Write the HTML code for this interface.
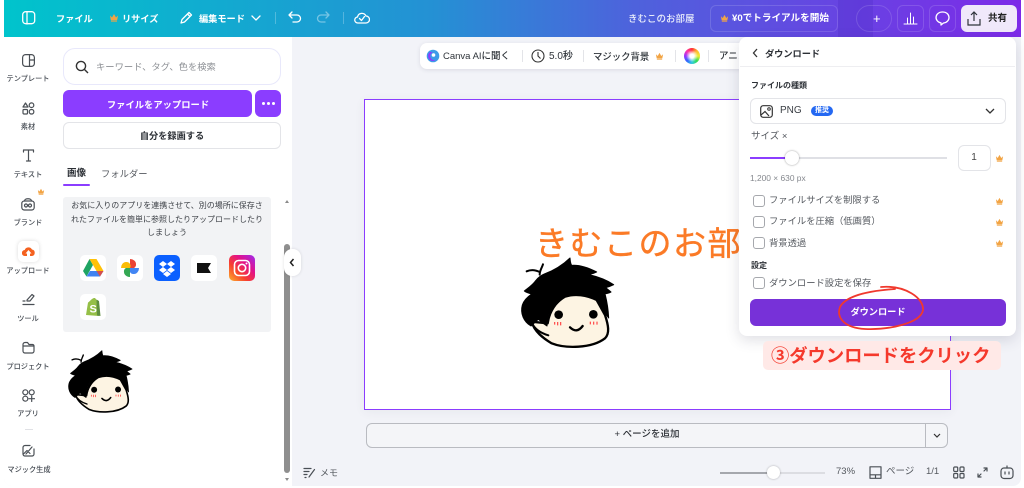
<!DOCTYPE html>
<html lang="ja"><head><meta charset="utf-8"><title>Canva</title>
<style>
*{box-sizing:border-box}
html,body{margin:0;padding:0}
body{width:1024px;height:488px;background:#fff;overflow:hidden;position:relative;font-family:"Liberation Sans","Noto Sans CJK JP",sans-serif;color:#2f343a}
div,svg,span.a{position:absolute}
.t{position:absolute;white-space:nowrap;line-height:20px;height:20px;font-size:10px;margin-top:2px}
.w{color:#fff;font-weight:700}
.c{transform:translateX(-50%)}
.s{font-size:7.200px;font-weight:500;color:#444a52;margin-top:1px}
.g{color:#55595f}
.i{fill:none;stroke:#4a4f55;stroke-width:1.200;stroke-linecap:round;stroke-linejoin:round}
.h{fill:none;stroke:#fff;stroke-width:1.300;stroke-linecap:round;stroke-linejoin:round}
.app{width:26px;height:26px;background:#fff;border-radius:5px}
.cb{width:12px;height:12px;border:1.200px solid #a6a8ad;border-radius:3px;left:753px;background:#fff}
.d{width:1px;background:#e3e4e8}
</style></head><body>
<svg width="0" height="0" style="position:absolute"><defs>
<symbol id="crown" viewBox="0 0 10 9"><path fill="#f2a444" d="M1 2.500 3 4.500 5 1 7 4.500 9 2.500 8.200 7H1.800Z"/><rect x="2" y="7.400" width="6" height="1.200" fill="#f2a444"/></symbol>
<symbol id="face" viewBox="0 0 300 312">
<path d="M50 215C58 245 85 265 110 280C150 296 230 296 270 265C285 250 280 225 270 195L245 150C215 135 180 130 150 140C125 155 105 175 98 220Z" fill="#fdf4e3" stroke="#000" stroke-width="7" stroke-linejoin="round"/>
<path d="M50 218C60 240 80 250 100 256" fill="none" stroke="#000" stroke-width="6" stroke-linecap="round"/>
<path d="M48 228C26 215 15 190 22 165C27 150 38 140 50 132C42 130 34 128 28 123C42 112 54 104 62 92C70 82 78 76 88 72C115 62 140 48 165 24C166 33 166 40 170 46C195 44 222 54 245 66C238 70 230 72 222 74C248 80 275 90 296 104C288 108 280 111 272 113C278 118 284 122 288 126C282 129 276 131 270 131C276 155 280 180 281 204L262 178L245 150C215 135 180 130 150 140C130 155 115 170 102 205C104 185 110 165 118 150C104 170 98 195 96 228C86 222 78 214 70 208C62 214 56 222 48 228Z" fill="#000" stroke="#000" stroke-width="3" stroke-linejoin="round"/>
<path d="M35 64C48 58 62 60 74 66M84 43C80 55 74 62 74 74" fill="none" stroke="#000" stroke-width="6" stroke-linecap="round"/>
<circle cx="131" cy="194" r="13" fill="#000"/><circle cx="235" cy="193" r="13" fill="#000"/>
<path d="M119 216v8M128 216v10M137 216v10M226 215v8M236 215v9M246 215v9" stroke="#f44" stroke-width="3.500"/>
<path d="M165 232Q185 252 203 228" fill="none" stroke="#000" stroke-width="7" stroke-linecap="round"/>
</symbol>
</defs></svg>

<!-- main background -->
<div style="left:4px;top:0;width:1017px;height:486px;background:#f2f3f8;border-radius:0 0 8px 8px;overflow:hidden">
<div style="left:0;top:37px;width:288px;height:449px;background:#fff"></div>
</div>

<!-- header -->
<div style="left:4px;top:0;width:1017px;height:37px;background:linear-gradient(90deg,#00c4cc 0%,#2491d4 42%,#4e62dc 62%,#7d2ae8 100%)"></div>
<div style="left:838px;top:0;width:35px;height:37px;background:rgba(70,40,190,.25)"></div>
<svg style="left:22px;top:11px" width="14" height="14" viewBox="0 0 14 14"><rect x=".7" y=".7" width="12" height="12" rx="3" class="h"/><path d="M5 1v12" class="h"/></svg>
<span class="t w" style="left:56px;top:7px;font-size:9.200px">ファイル</span>
<svg style="left:109px;top:13px" width="10" height="9"><use href="#crown"/></svg>
<span class="t w" style="left:122px;top:7px;font-size:9.200px">リサイズ</span>
<svg style="left:179px;top:11px" width="14" height="14" viewBox="0 0 14 14"><path d="M2 12 3 8.500 10 1.500 12.500 4 5.500 11Z M8.500 3l2.500 2.500" class="h"/></svg>
<span class="t w" style="left:199px;top:7px;font-size:9.200px">編集モード</span>
<svg style="left:251px;top:15px" width="10" height="6"><path d="M1 1l4 4 4-4" class="h"/></svg>
<div class="d" style="left:275px;top:12px;height:12px;background:rgba(255,255,255,.25)"></div>
<svg style="left:288px;top:11px" width="14" height="13" viewBox="0 0 14 13"><path d="M4 1 1 4l3 3M1 4h8a3.500 3.500 0 0 1 0 7H5" class="h"/></svg>
<svg style="left:316px;top:11px;opacity:.4" width="14" height="13" viewBox="0 0 14 13"><path d="M10 1l3 3-3 3M13 4H5a3.500 3.500 0 0 0 0 7h4" class="h"/></svg>
<div class="d" style="left:343px;top:12px;height:12px;background:rgba(255,255,255,.25)"></div>
<svg style="left:354px;top:11px" width="16" height="13" viewBox="0 0 16 13"><path d="M4 12a3 3 0 0 1-.5-6A4.500 4.500 0 0 1 12 5a3.500 3.500 0 0 1 0 7ZM5.500 7.500 7.500 9.500 10.500 5.500" class="h"/></svg>
<span class="t" style="left:628px;top:8px;color:#e8ecfb;font-size:9.500px;font-weight:500">きむこのお部屋</span>
<div style="left:710px;top:5px;width:128px;height:27px;border:1px solid rgba(255,255,255,.14);border-radius:6px"></div>
<svg style="left:720px;top:14px" width="9" height="8"><use href="#crown"/></svg>
<span class="t w" style="left:732px;top:7px;font-size:9.600px">¥0でトライアルを開始</span>
<div style="left:856px;top:5px;width:36px;height:27px;border:1px solid rgba(255,255,255,.14);border-radius:14px"></div>
<span class="t w" style="left:873px;top:7px;font-size:13px;font-weight:400">+</span>
<div style="left:897px;top:5px;width:27px;height:27px;border:1px solid rgba(255,255,255,.14);border-radius:6px"></div>
<svg style="left:903px;top:12px" width="15" height="13" viewBox="0 0 15 13"><path d="M1 12h13M4.500 12V6M7.500 12V1M10.500 12V5" class="h" style="stroke-width:1"/></svg>
<div style="left:929px;top:5px;width:27px;height:27px;border:1px solid rgba(255,255,255,.14);border-radius:6px"></div>
<svg style="left:935px;top:11px" width="15" height="15" viewBox="0 0 15 15"><path d="M7.500 1a6 5.500 0 0 1 1 11L6 14v-2.100A6 5.500 0 0 1 7.500 1Z" class="h"/></svg>
<div style="left:961px;top:5px;width:56px;height:27px;background:#f0e8fa;border-radius:6px"></div>
<svg style="left:967px;top:11px" width="14" height="15" viewBox="0 0 14 15"><path d="M7 10V1.500M4 4l3-3 3 3M1 8v6h12V8" fill="none" stroke="#2f343a" stroke-width="1.200"/></svg>
<span class="t" style="left:988px;top:7px;font-weight:700;color:#222;font-size:9.500px">共有</span>

<!-- sidebar rail -->
<svg style="left:22px;top:54px" width="13" height="13" viewBox="0 0 13 13"><rect x=".6" y=".6" width="11.800" height="11.800" rx="3" class="i"/><path d="M7.500 1v11M7.500 6H12" class="i"/></svg>
<span class="t s c" style="left:28px;top:68px">テンプレート</span>
<svg style="left:22px;top:102px" width="13" height="13" viewBox="0 0 13 13"><path d="M3.500 1 6 5H1Z" class="i"/><circle cx="9.500" cy="3.200" r="2.300" class="i"/><rect x="1" y="7.500" width="4.500" height="4.500" rx="1" class="i"/><rect x="7.300" y="7.500" width="4.500" height="4.500" rx="2" class="i"/></svg>
<span class="t s c" style="left:28px;top:116px">素材</span>
<svg style="left:22px;top:149px" width="13" height="13" viewBox="0 0 13 13"><path d="M1.500 3V1h10v2M6.500 1v11M4.500 12h4" class="i"/></svg>
<span class="t s c" style="left:28px;top:164px">テキスト</span>
<svg style="left:37px;top:188px" width="8" height="7"><use href="#crown"/></svg>
<svg style="left:21px;top:197px" width="14" height="14" viewBox="0 0 14 14"><rect x=".8" y="4" width="12.400" height="9" rx="2.500" class="i"/><path d="M3.500 4C3.500 1 10.500 1 10.500 4" class="i"/><circle cx="5" cy="8.500" r="1.500" class="i"/><circle cx="9" cy="8.500" r="1.500" class="i"/></svg>
<span class="t s c" style="left:28px;top:212px">ブランド</span>
<div style="left:18px;top:241px;width:21px;height:21px;background:#fff;border-radius:5px;box-shadow:0 0 4px rgba(0,0,0,.14)"></div>
<svg style="left:22px;top:246px" width="13" height="11" viewBox="0 0 13 11"><path d="M3 10a3 3 0 0 1-.3-6A4 4 0 0 1 10 3.500 3.300 3.300 0 0 1 10 10H8V7.500h1.500L6.500 4 3.500 7.500H5V10Z" fill="#f4611f"/></svg>
<span class="t s c" style="left:28px;top:260px">アップロード</span>
<svg style="left:22px;top:292px" width="14" height="14" viewBox="0 0 14 14"><path d="M5 8 10 2.500 12 4 8 9H5ZM1 9h2M1 12.500h11" class="i"/></svg>
<span class="t s c" style="left:28px;top:308px">ツール</span>
<svg style="left:22px;top:341px" width="13" height="13" viewBox="0 0 13 13"><path d="M1 3.500A2 2 0 0 1 3 1.500h2.500L7 3.500h3.500a1.500 1.500 0 0 1 1.500 1.500v5a2 2 0 0 1-2 2H3a2 2 0 0 1-2-2ZM1 5h11" class="i"/></svg>
<span class="t s c" style="left:28px;top:356px">プロジェクト</span>
<svg style="left:22px;top:389px" width="13" height="13" viewBox="0 0 13 13"><circle cx="3.300" cy="3.300" r="2.500" class="i"/><circle cx="9.700" cy="3.300" r="2.500" class="i"/><circle cx="3.300" cy="9.700" r="2.500" class="i"/><path d="M9.700 7v5.500M7 9.700h5.500" class="i"/></svg>
<span class="t s c" style="left:28px;top:403px">アプリ</span>
<div style="left:25px;top:429px;width:8px;height:1px;background:#e0e1e5"></div>
<svg style="left:22px;top:444px" width="13" height="13" viewBox="0 0 13 13"><path d="M8 1.500H3A2 2 0 0 0 1 3.500v6.500a2 2 0 0 0 2 2h7a2 2 0 0 0 2-2V5M1.500 10 5 6.500 8 9.500M4 10 10 3" class="i"/></svg>
<span class="t s c" style="left:29px;top:459px">マジック生成</span>

<!-- side panel -->
<div style="left:63px;top:48px;width:218px;height:37px;border:1px solid #e8e8fb;border-radius:12px;background:#fff"></div>
<svg style="left:75px;top:60px" width="14" height="14" viewBox="0 0 14 14"><circle cx="6" cy="6" r="4.600" fill="none" stroke="#333" stroke-width="1.400"/><path d="M9.500 9.500 13 13" stroke="#333" stroke-width="1.400"/></svg>
<span class="t" style="left:96px;top:55px;color:#8d9095;font-size:9.300px">キーワード、タグ、色を検索</span>
<div style="left:63px;top:90px;width:189px;height:27px;background:#8b3dff;border-radius:6px"></div>
<span class="t w c" style="left:158px;top:93px;font-size:9.300px">ファイルをアップロード</span>
<div style="left:255px;top:90px;width:26px;height:27px;background:#8b3dff;border-radius:6px"></div>
<div style="left:262px;top:102px;width:3px;height:3px;background:#fff;border-radius:50%;box-shadow:5px 0 #fff,10px 0 #fff"></div>
<div style="left:63px;top:122px;width:218px;height:27px;border:1px solid #e3e4e8;border-radius:6px;background:#fff"></div>
<span class="t c" style="left:172px;top:124px;font-weight:700;color:#2b2f35;font-size:9.200px">自分を録画する</span>
<span class="t" style="left:67px;top:162px;font-weight:700;color:#2b2f35;font-size:9.500px">画像</span>
<span class="t g" style="left:101px;top:162px;font-size:9.300px">フォルダー</span>
<div style="left:63px;top:184px;width:27px;height:2px;background:#8b3dff;border-radius:1px"></div>
<div style="left:63px;top:197px;width:208px;height:135px;background:#f2f3f5;border-radius:3px"></div>
<span class="t c" style="left:167px;top:194px;font-size:8px;color:#3d4147">お気に入りのアプリを連携させて、別の場所に保存さ</span>
<span class="t c" style="left:167px;top:208px;font-size:8px;color:#3d4147">れたファイルを簡単に参照したりアップロードしたり</span>
<span class="t c" style="left:167px;top:221px;font-size:8px;color:#3d4147">しましょう</span>

<div class="app" style="left:80px;top:255px"><svg width="26" height="26" viewBox="0 0 26 26"><path d="M9.500 4 3 16l3.500 5.500L13 10Z" fill="#1fa463"/><path d="M9.500 4h7L23.500 16H16.500Z" fill="#ffc107"/><path d="M6.500 21.500 10 16h13.500L20 21.500Z" fill="#3f82f1"/><path d="M16.500 16h7L20 21.500Z" fill="#e64a3b" opacity=".9"/></svg></div>
<div class="app" style="left:117px;top:255px"><svg width="26" height="26" viewBox="0 0 26 26"><path d="M13 13V4a6 5 0 0 1 6 5 4 4 0 0 1-6 4Z" fill="#ea4335"/><path d="M13 13h9a5 6 0 0 1-5 6 4 4 0 0 1-4-6Z" fill="#4285f4"/><path d="M13 13v9a6 5 0 0 1-6-5 4 4 0 0 1 6-4Z" fill="#34a853"/><path d="M13 13H4a5 6 0 0 1 5-6 4 4 0 0 1 4 6Z" fill="#fbbc05"/></svg></div>
<div class="app" style="left:154px;top:255px;background:#0b60ff"><svg width="26" height="26" viewBox="0 0 26 26"><path d="M9 6 13 9 9 12 5 9ZM17 6 21 9 17 12 13 9ZM9 12 13 15 9 18 5 15ZM17 12 21 15 17 18 13 15ZM9 19 13 16 17 19 13 22Z" fill="#fff"/></svg></div>
<div class="app" style="left:191px;top:255px"><svg width="26" height="26" viewBox="0 0 26 26"><path d="M6 8H20L17 13 20 18H6Z" fill="#111"/></svg></div>
<div class="app" style="left:229px;top:255px;background:linear-gradient(45deg,#fcb12d 0%,#f7402e 35%,#e3128a 65%,#9c2cf0 100%)"><svg width="26" height="26" viewBox="0 0 26 26"><rect x="5.500" y="5.500" width="15" height="15" rx="4" fill="none" stroke="#fff" stroke-width="1.600"/><circle cx="13" cy="13" r="3.700" fill="none" stroke="#fff" stroke-width="1.600"/><circle cx="17.500" cy="8.500" r="1" fill="#fff"/></svg></div>
<div class="app" style="left:80px;top:294px"><svg width="26" height="26" viewBox="0 0 26 26"><path d="M6 21 8 8.500C10 7.500 12 3.500 15 4L17 6.500 19 22Z" fill="#95bf47"/><path d="M16.500 5.500 19 7l1.500 15-3.500-.5Z" fill="#5e8e3e"/><text x="9.500" y="18.500" font-size="11" font-weight="700" fill="#fff" font-family="Liberation Sans, sans-serif">S</text></svg></div>

<svg style="left:64px;top:345px" width="69" height="72"><use href="#face" width="69" height="72"/></svg>

<!-- scrollbar -->
<div style="left:284px;top:244px;width:6px;height:229px;background:#8f8f8f;border-radius:3px"></div>
<div style="left:285px;top:200px;border:2.500px solid transparent;border-bottom:3.500px solid #8a8a8a;border-top:0"></div>
<div style="left:285px;top:478px;border:2.500px solid transparent;border-top:3.500px solid #8a8a8a;border-bottom:0"></div>
<div style="left:284px;top:249px;width:17px;height:27px;background:#fff;border-radius:8px;box-shadow:0 0 3px rgba(0,0,0,.12)"></div>
<svg style="left:289px;top:258px" width="6" height="9"><path d="M4.500 1 1.500 4.500l3 3.500" fill="none" stroke="#222" stroke-width="1.500"/></svg>

<!-- canvas -->
<div style="left:364px;top:99px;width:587px;height:311px;background:#fff;border:1.500px solid #8b3dff;box-shadow:0 2px 10px rgba(60,60,90,.06)"></div>
<span class="t" style="left:535px;top:221px;height:36px;line-height:36px;font-size:33px;letter-spacing:1.500px;color:#fb7a26;-webkit-text-stroke:.4px #fb7a26;font-family:'WenQuanYi Zen Hei','Noto Sans CJK JP',sans-serif">きむこのお部屋</span>
<svg style="left:515px;top:250px" width="100" height="104"><use href="#face" width="100" height="104"/></svg>

<!-- floating toolbar -->
<div style="left:420px;top:43px;width:340px;height:26px;background:#fff;border-radius:7px;box-shadow:0 1px 4px rgba(50,50,80,.12)"></div>
<svg style="left:426px;top:49px" width="14" height="14" viewBox="0 0 14 14"><circle cx="7" cy="7" r="6.300" fill="#3d9be8"/><path d="M4 3a5 5 0 0 0 6 8 4 4 0 0 1-3-8Z" fill="#8b3dff"/><circle cx="7.500" cy="6" r="1.800" fill="#fff"/></svg>
<span class="t" style="left:443px;top:45px;font-weight:500;font-size:9.500px">Canva AIに聞く</span>
<div class="d" style="left:522px;top:50px;height:12px"></div>
<svg style="left:531px;top:49px" width="14" height="14" viewBox="0 0 14 14"><circle cx="7" cy="7" r="6" fill="none" stroke="#333" stroke-width="1.100"/><path d="M7 3v4l2.500 2.500" fill="none" stroke="#333" stroke-width="1.100"/></svg>
<span class="t" style="left:549px;top:45px;font-weight:500">5.0秒</span>
<div class="d" style="left:583px;top:50px;height:12px"></div>
<span class="t" style="left:593px;top:45px;font-weight:500;font-size:9.400px">マジック背景</span>
<svg style="left:655px;top:52px" width="9" height="8"><use href="#crown"/></svg>
<div class="d" style="left:675px;top:50px;height:12px"></div>
<div style="left:684px;top:48px;width:16px;height:16px;border-radius:50%;background:radial-gradient(circle,#fff 0 2px,transparent 6px),conic-gradient(#f33,#fb3,#ee3,#3d5,#3cd,#36f,#93f,#f3a,#f33)"></div>
<div class="d" style="left:708px;top:50px;height:12px"></div>
<span class="t" style="left:719px;top:45px;font-weight:500;font-size:9.500px">アニメイト</span>

<!-- bottom -->
<div style="left:366px;top:423px;width:582px;height:25px;border:1px solid #b9bbc1;border-radius:6px;background:#f4f5f8"></div>
<div style="left:925px;top:423px;width:1px;height:25px;background:#b9bbc1"></div>
<span class="t c" style="left:647px;top:423px;font-size:9.500px;font-weight:500;color:#2b2f35">+ ページを追加</span>
<svg style="left:933px;top:433px" width="8" height="6"><path d="M1 1l3 3 3-3" fill="none" stroke="#333" stroke-width="1.200"/></svg>
<svg style="left:303px;top:466px" width="13" height="13" viewBox="0 0 13 13"><path d="M1 2.500h7M1 5.500h5M1 8.500h3M2 11.500h1M6 11 11.500 3.500" class="i"/></svg>
<span class="t g" style="left:320px;top:461px;font-size:9px">メモ</span>
<div style="left:720px;top:472px;width:105px;height:2px;background:#dcdde2"></div>
<div style="left:720px;top:472px;width:50px;height:2px;background:#a5a7ad"></div>
<div style="left:767px;top:466px;width:13px;height:13px;background:#fff;border-radius:50%;box-shadow:0 0 2px rgba(0,0,0,.3)"></div>
<span class="t g" style="left:836px;top:460px;font-size:9.500px">73%</span>
<svg style="left:869px;top:466px" width="13" height="13" viewBox="0 0 13 13"><path d="M1 .8h11v8H1ZM1 8.800v3.500h11V8.800M6.500 8.800v3.500" class="i"/></svg>
<span class="t g" style="left:886px;top:460px;font-size:9.500px">ページ</span>
<span class="t g" style="left:926px;top:460px;font-size:9.500px">1/1</span>
<svg style="left:953px;top:466px" width="12" height="13" viewBox="0 0 12 13"><rect x=".7" y="1" width="4" height="4.500" rx="1" class="i"/><rect x="7" y="1" width="4" height="4.500" rx="1" class="i"/><rect x=".7" y="7.500" width="4" height="4.500" rx="1" class="i"/><rect x="7" y="7.500" width="4" height="4.500" rx="1" class="i"/></svg>
<svg style="left:977px;top:467px" width="11" height="11" viewBox="0 0 11 11"><path d="M7 1h3v3M10 1 7 4M1 7v3h3M1 10l3-3" class="i"/></svg>
<svg style="left:1000px;top:465px" width="14" height="15" viewBox="0 0 14 15"><rect x="1" y="3" width="12" height="10.500" rx="3" class="i"/><path d="M7 1v2M5 7v2M9 7v2" class="i"/></svg>

<!-- download panel -->
<div style="left:739px;top:37px;width:277px;height:299px;background:#fff;border-radius:8px;box-shadow:0 4px 14px rgba(50,50,80,.16)"></div>
<svg style="left:752px;top:48px" width="7" height="10"><path d="M5 1 1.500 5 5 9" fill="none" stroke="#333" stroke-width="1.300"/></svg>
<span class="t" style="left:765px;top:42px;font-weight:700;color:#2b2f35;font-size:9.200px">ダウンロード</span>
<div style="left:740px;top:66px;width:275px;height:1px;background:#eeeef1"></div>
<span class="t" style="left:751px;top:74px;font-size:8px;font-weight:700;color:#2b2f35">ファイルの種類</span>
<div style="left:750px;top:98px;width:256px;height:26px;border:1px solid #e3e4e8;border-radius:6px"></div>
<svg style="left:760px;top:105px" width="13" height="13" viewBox="0 0 13 13"><rect x=".7" y=".7" width="11.600" height="11.600" rx="2.500" fill="none" stroke="#333" stroke-width="1.200"/><path d="M1 10 5 6.500 9 11" fill="none" stroke="#333" stroke-width="1.200"/><circle cx="9" cy="4" r="1.300" fill="none" stroke="#333"/></svg>
<span class="t" style="left:780px;top:99px;color:#3a3e44">PNG</span>
<div style="left:811px;top:106px;width:22px;height:10px;background:#2468f2;border-radius:5px"></div>
<span class="t w c" style="left:822px;top:99px;font-size:7px">推奨</span>
<svg style="left:985px;top:108px" width="10" height="7"><path d="M1 1l4 4 4-4" fill="none" stroke="#333" stroke-width="1.300"/></svg>
<span class="t g" style="left:751px;top:125px;font-size:9.500px">サイズ ×</span>
<div style="left:750px;top:157px;width:197px;height:2px;background:#dfe0e5"></div>
<div style="left:750px;top:157px;width:38px;height:2px;background:#8b3dff"></div>
<div style="left:785px;top:151px;width:14px;height:14px;background:#fff;border-radius:50%;box-shadow:0 0 2px rgba(0,0,0,.4)"></div>
<div style="left:958px;top:145px;width:33px;height:26px;border:1px solid #e3e4e8;border-radius:6px"></div>
<span class="t c" style="left:974px;top:146px;color:#444">1</span>
<svg style="left:995px;top:154px" width="9" height="8"><use href="#crown"/></svg>
<span class="t" style="left:750px;top:166px;font-size:8.400px;color:#85888e">1,200 × 630 px</span>

<div class="cb" style="top:195px"></div><span class="t g" style="left:769px;top:188px;font-size:9.300px">ファイルサイズを制限する</span><svg style="left:995px;top:197px" width="9" height="8"><use href="#crown"/></svg>
<div class="cb" style="top:216px"></div><span class="t g" style="left:769px;top:209px;font-size:9.300px">ファイルを圧縮（低画質）</span><svg style="left:995px;top:218px" width="9" height="8"><use href="#crown"/></svg>
<div class="cb" style="top:237px"></div><span class="t g" style="left:769px;top:231px;font-size:9.300px">背景透過</span><svg style="left:995px;top:239px" width="9" height="8"><use href="#crown"/></svg>
<span class="t" style="left:751px;top:254px;font-size:8px;font-weight:700;color:#2b2f35">設定</span>
<div class="cb" style="top:277px"></div><span class="t g" style="left:769px;top:271px;font-size:9.300px">ダウンロード設定を保存</span>
<div style="left:750px;top:299px;width:256px;height:27px;background:#7731d8;border-radius:6px"></div>
<span class="t w c" style="left:878px;top:300px;font-size:9.200px">ダウンロード</span>

<!-- annotation -->
<svg style="left:830px;top:280px" width="100" height="56" viewBox="830 280 100 56"><path d="M881 287C905 285 924 298 923 310C921 323 890 330 865 329C845 328 836 318 840 307C845 297 865 291 895 289" fill="none" stroke="#f0392d" stroke-width="1.800" stroke-linecap="round"/></svg>
<div style="left:763px;top:341px;width:238px;height:29px;background:#ffe9e7;border-radius:5px"></div>
<span class="t" style="left:771px;top:344px;font-size:18.300px;font-weight:700;color:#f5392c">③ダウンロードをクリック</span>
</body></html>
